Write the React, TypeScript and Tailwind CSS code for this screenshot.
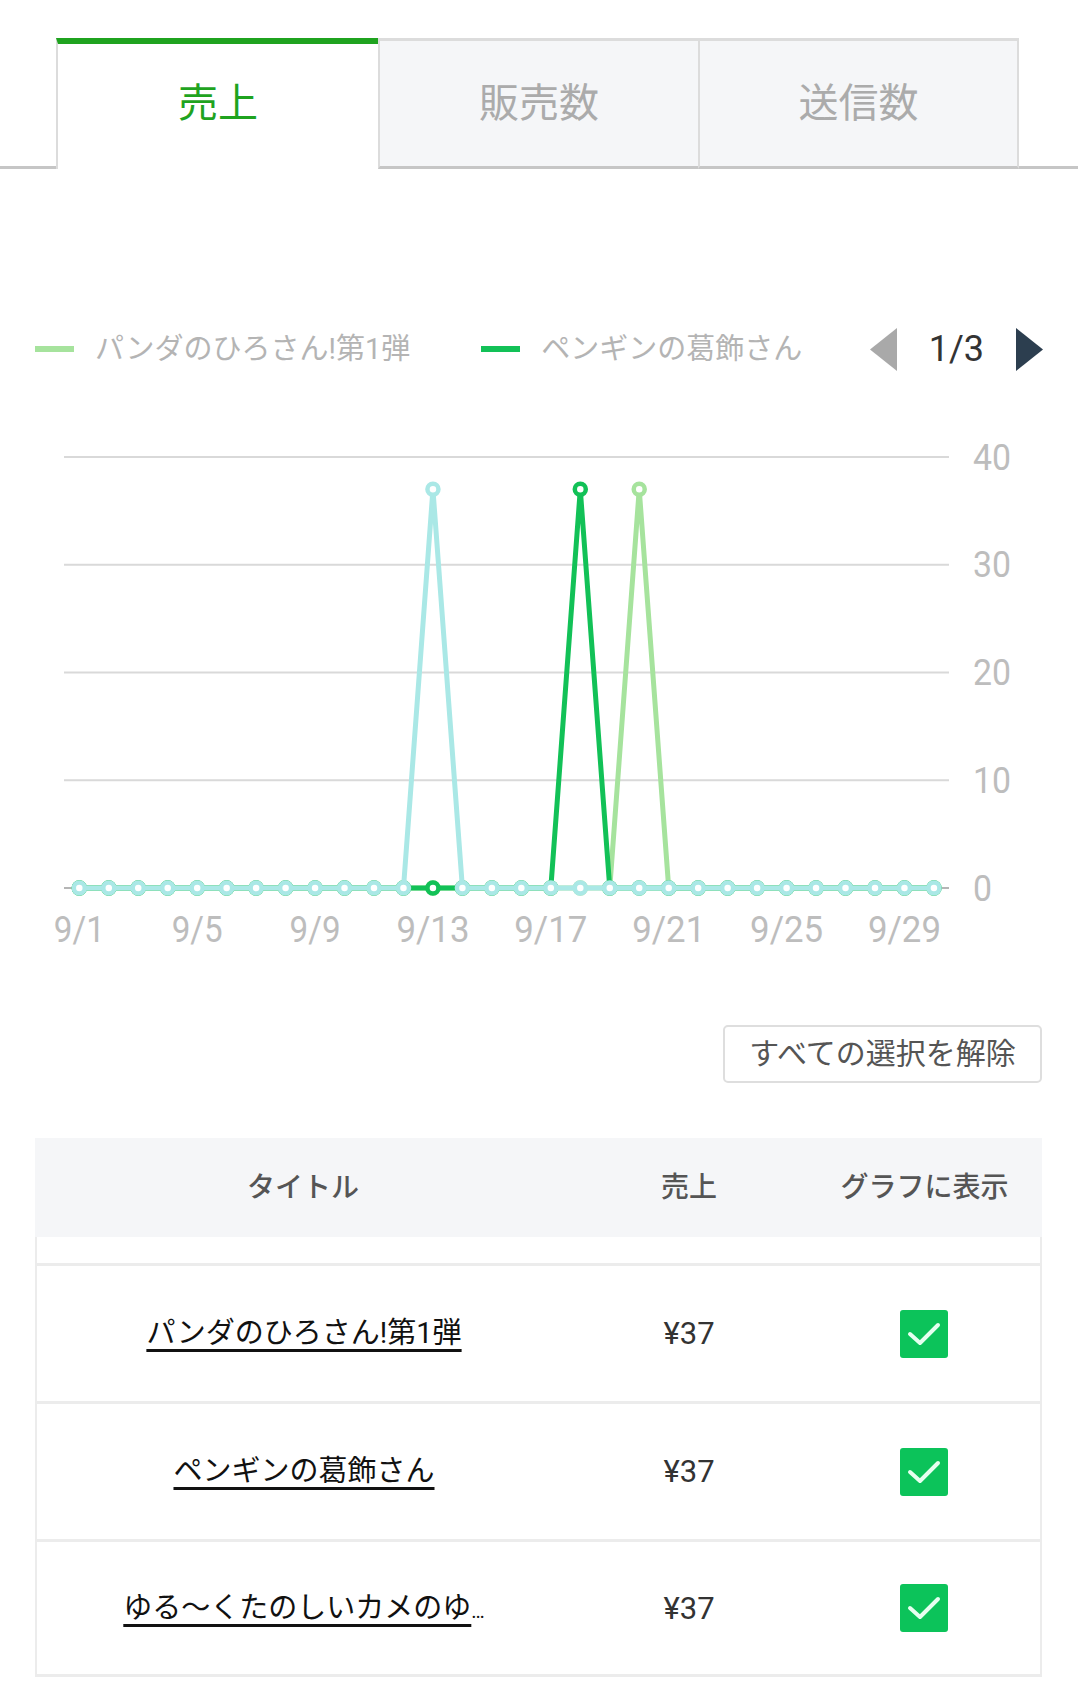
import React from "react";

const X0 = 79.3;
const DX = 29.47;
const Y0 = 888;
const K = 10.775;
const DAYS = Array.from({ length: 30 }, (_, i) => i);
const xAt = (i: number) => X0 + i * DX;
const yAt = (v: number) => Y0 - v * K;

type Series = { color: string; peak: number };

// drawn bottom to top
const SERIES: Series[] = [
  { color: "#a6e39d", peak: 19 },
  { color: "#12c157", peak: 17 },
  { color: "#aae8e6", peak: 12 },
];

function Tabs() {
  return (
    <div className="flex h-[131px] mt-[38px]">
      <div className="w-[56px] border-b-[3px] border-[#c6c6c6]" />
      <div className="w-[322px] pb-[5px] border-t-[6px] border-t-[#1fa31f] border-l-2 border-l-[#dcdcdc] bg-white flex items-center justify-center">
        <span className="text-[40px] text-[#1fa31f] leading-none">売上</span>
      </div>
      <div className="w-[320px] border-t-[3px] border-l-2 border-[#dcdcdc] border-b-[3px] border-b-[#c6c6c6] bg-[#f5f6f8] flex items-center justify-center">
        <span className="text-[40px] text-[#ababab] leading-none">販売数</span>
      </div>
      <div className="w-[321px] border-t-[3px] border-x-2 border-[#dcdcdc] border-b-[3px] border-b-[#c6c6c6] bg-[#f5f6f8] flex items-center justify-center">
        <span className="text-[40px] text-[#ababab] leading-none">送信数</span>
      </div>
      <div className="flex-1 border-b-[3px] border-[#c6c6c6]" />
    </div>
  );
}

function Legend() {
  return (
    <div className="mt-[158px] h-[44px] flex items-center pl-[35px] pr-[35px]">
      <span className="w-[39px] h-[6px] bg-[#a6e39d]" />
      <span className="ml-[21px] text-[29px] text-[#b4b4b4] leading-none">パンダのひろさん!第1弾</span>
      <span className="ml-[71px] w-[39px] h-[6px] bg-[#12c157]" />
      <span className="ml-[21px] text-[29px] text-[#b4b4b4] leading-none">ペンギンの葛飾さん</span>
      <div className="ml-auto flex items-center">
        <svg width="27" height="43" viewBox="0 0 27 43">
          <polygon points="27,0 27,43 0,21.5" fill="#a9a9a9" />
        </svg>
        <span className="ml-[32px] text-[36px] text-[#333] leading-none">1/3</span>
        <svg className="ml-[32px]" width="27" height="43" viewBox="0 0 27 43">
          <polygon points="0,0 0,43 27,21.5" fill="#2c3e4f" />
        </svg>
      </div>
    </div>
  );
}

function Chart() {
  const ticks = [40, 30, 20, 10, 0];
  return (
    <svg className="mt-[29px] block" width="1078" height="560" viewBox="0 400 1078 560">
      {ticks.map((t) => (
        <g key={t}>
          <line
            x1={64}
            x2={949}
            y1={yAt(t)}
            y2={yAt(t)}
            stroke={t === 0 ? "#b5b5b5" : "#d9d9d9"}
            strokeWidth={2}
          />
          <text
            x={973}
            y={yAt(t)}
            dominantBaseline="central"
            fontSize={37}
            fill="#bdbdbd"
            textLength={t === 0 ? 19 : 38}
            lengthAdjust="spacingAndGlyphs"
          >
            {t}
          </text>
        </g>
      ))}
      {SERIES.map((s) => {
        const pts = DAYS.map((i) => [xAt(i), i === s.peak ? yAt(37) : Y0]);
        return (
          <g key={s.color}>
            <polyline
              points={pts.map((p) => p.join(",")).join(" ")}
              fill="none"
              stroke={s.color}
              strokeWidth={5}
              strokeLinejoin="round"
            />
            {pts.map(([x, y], i) => (
              <circle key={i} cx={x} cy={y} r={5.5} fill="#fff" stroke={s.color} strokeWidth={4.5} />
            ))}
          </g>
        );
      })}
      {DAYS.filter((i) => i % 4 === 0).map((i) => {
        const label = `9/${i + 1}`;
        return (
          <text
            key={i}
            x={xAt(i)}
            y={929}
            textAnchor="middle"
            dominantBaseline="central"
            fontSize={37}
            fill="#bdbdbd"
            textLength={label.length === 3 ? 51 : 73}
            lengthAdjust="spacingAndGlyphs"
          >
            {label}
          </text>
        );
      })}
    </svg>
  );
}

function Check() {
  return (
    <div className="w-[48px] h-[48px] rounded-[3px] bg-[#0cc35a] flex items-center justify-center">
      <svg width="48" height="48" viewBox="0 0 48 48">
        <path d="M10 24 L20 33 L38 15" fill="none" stroke="#e6fff0" strokeWidth={4} strokeLinecap="round" strokeLinejoin="round" />
      </svg>
    </div>
  );
}

const ROWS: { title: string; more?: boolean }[] = [
  { title: "パンダのひろさん!第1弾" },
  { title: "ペンギンの葛飾さん" },
  { title: "ゆる〜くたのしいカメのゆ", more: true },
];

function Table() {
  return (
    <div className="mt-[55px] ml-[35px] w-[1007px]">
      <div className="h-[99px] bg-[#f5f6f8] grid grid-cols-[536px_236px_235px] items-center text-[28px] font-medium text-[#555] leading-none">
        <span className="text-center">タイトル</span>
        <span className="text-center">売上</span>
        <span className="text-center">グラフに表示</span>
      </div>
      <div className="h-[26px] border-x-2 border-[#ececec]" />
      {ROWS.map((r, idx) => (
        <div
          key={r.title}
          className={`h-[138px] border-t-[3px] border-x-2 border-[#ececec] grid grid-cols-[534px_236px_233px] items-center ${
            idx === ROWS.length - 1 ? "border-b-[3px]" : ""
          }`}
        >
          <div className="text-center text-[29px] text-[#111] leading-none">
            <span className="underline decoration-[3px] underline-offset-[6px]">{r.title}</span>
            {r.more && <span className="text-[20px]">…</span>}
          </div>
          <div className="text-center text-[31px] text-[#333] leading-none">¥37</div>
          <div className="flex justify-center">
            <Check />
          </div>
        </div>
      ))}
    </div>
  );
}

export default function App() {
  return (
    <div className="w-[1078px] min-h-[1681px] bg-white overflow-hidden font-['Roboto','Noto_Sans_CJK_JP',sans-serif]">
      <Tabs />
      <Legend />
      <Chart />
      <div className="mt-[65px] flex justify-end pr-[36px]">
        <button className="w-[319px] h-[58px] border-2 border-[#dedede] rounded-[5px] text-[30px] text-[#555] leading-none flex items-center justify-center">
          すべての選択を解除
        </button>
      </div>
      <Table />
    </div>
  );
}
